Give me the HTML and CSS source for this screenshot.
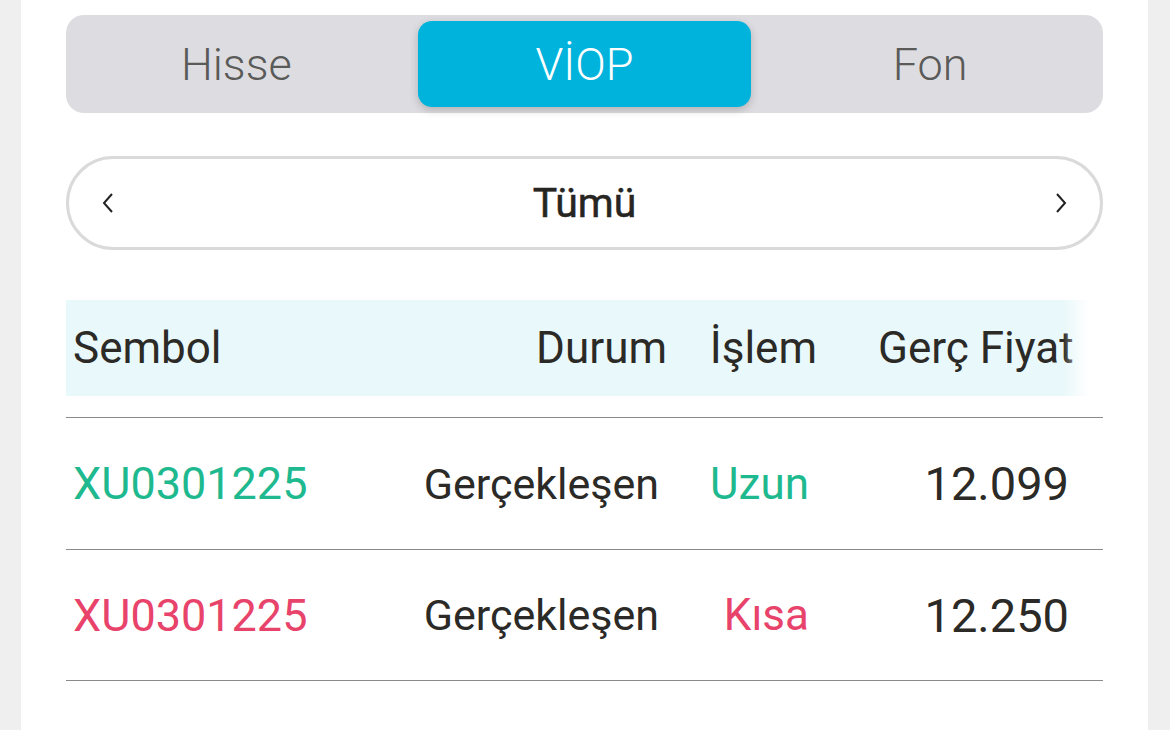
FILE: index.html
```html
<!doctype html>
<html lang="tr">
<head>
	<meta charset="UTF-8">
	<meta name="viewport" content="width=device-width, initial-scale=1.0">
	<title>Emirler</title>
	<link rel="stylesheet" href="styles.css">
</head>
<body>
	<div class="page">
		<div class="segment">
			<div class="seg-item"><span>Hisse</span></div>
			<div class="seg-item active"><span>VİOP</span></div>
			<div class="seg-item"><span>Fon</span></div>
		</div>

		<div class="picker">
			<svg class="chev" width="12" height="22" viewBox="0 0 12 22">
				<polyline points="10,2 2,11 10,20" fill="none" stroke="#222" stroke-width="2"/>
			</svg>
			<span class="picker-title">Tümü</span>
			<svg class="chev" width="12" height="22" viewBox="0 0 12 22">
				<polyline points="2,2 10,11 2,20" fill="none" stroke="#222" stroke-width="2"/>
			</svg>
		</div>

		<div class="table">
			<div class="thead">
				<div class="c1">Sembol</div>
				<div class="c2">Durum</div>
				<div class="c3">İşlem</div>
				<div class="c4">Gerç Fiyat</div>
			</div>
			<div class="row">
				<div class="c1 up">XU0301225</div>
				<div class="c2">Gerçekleşen</div>
				<div class="c3 up">Uzun</div>
				<div class="c4 price">12.099</div>
			</div>
			<div class="row">
				<div class="c1 down">XU0301225</div>
				<div class="c2">Gerçekleşen</div>
				<div class="c3 down">Kısa</div>
				<div class="c4 price">12.250</div>
			</div>
		</div>
	</div>
</body>
</html>
```

FILE: styles.css
```css
* {
	margin: 0;
	padding: 0;
	box-sizing: border-box;
}

body {
	background: #efefef;
	font-family: Roboto, "Liberation Sans", sans-serif;
	color: #2b2a27;
}

.page {
	width: 1127px;
	height: 730px;
	margin-left: 21px;
	background: #fff;
	padding: 15px 45px 0;
	overflow: hidden;
}

/* tab switch */
.segment {
	display: flex;
	height: 98px;
	background: #dddde1;
	border-radius: 18px;
	padding: 6px 0;
}
.seg-item {
	flex: 1;
	padding: 0 6px;
	display: flex;
}
.seg-item span {
	flex: 1;
	display: flex;
	align-items: center;
	justify-content: center;
	font-size: 45px;
	font-weight: 300;
	color: #5a5a58;
	border-radius: 14px;
}
.seg-item:first-child span {
	padding-right: 5px;
}
.seg-item.active span {
	background: #00b3dc;
	color: #fff;
	box-shadow: 0 3px 9px rgba(0, 0, 0, 0.2);
}

/* filter */
.picker {
	margin-top: 43px;
	height: 94px;
	border: 3px solid #dadada;
	border-radius: 47px;
	display: flex;
	align-items: center;
	justify-content: space-between;
	padding: 0 33px 0 33px;
}
.picker-title {
	font-size: 41px;
	font-weight: 400;
	color: #262521;
	-webkit-text-stroke: 0.5px #262521;
}

/* list */
.table {
	margin-top: 50px;
}
.thead,
.row {
	display: grid;
	grid-template-columns: 354px 255px 152px 276px;
	align-items: center;
}
.thead {
	position: relative;
	height: 96px;
	background: linear-gradient(to right, #e9f8fa 1008px, #fff 1037px);
	font-size: 44px;
	margin-bottom: 21px;
}
.thead::after {
	content: "";
	position: absolute;
	top: 0;
	right: 0;
	width: 40px;
	height: 100%;
	background: linear-gradient(to right, rgba(255, 255, 255, 0), #fff 70%);
}
.thead .c1 { padding-left: 7px; }
.thead .c2 { text-align: right; padding-right: 8px; }
.thead .c3 { text-align: right; padding-right: 10px; }
.thead .c4 { padding-left: 51px; white-space: nowrap; }

.row {
	height: 132px;
	border-top: 1.5px solid #8a8a8a;
	font-size: 43px;
}
.row:last-child {
	border-bottom: 1.5px solid #8a8a8a;
}
.row .c1 { padding-left: 7px; font-size: 45px; }
.row .c2 { text-align: right; padding-right: 16px; }
.row .c3 { text-align: right; padding-right: 18px; font-size: 44px; }
.row .c4 { text-align: right; padding-right: 34px; }
.price {
	font-size: 47px;
	font-weight: 400;
}

.up { color: #1fb98f; }
.down { color: #e8436a; }
```
